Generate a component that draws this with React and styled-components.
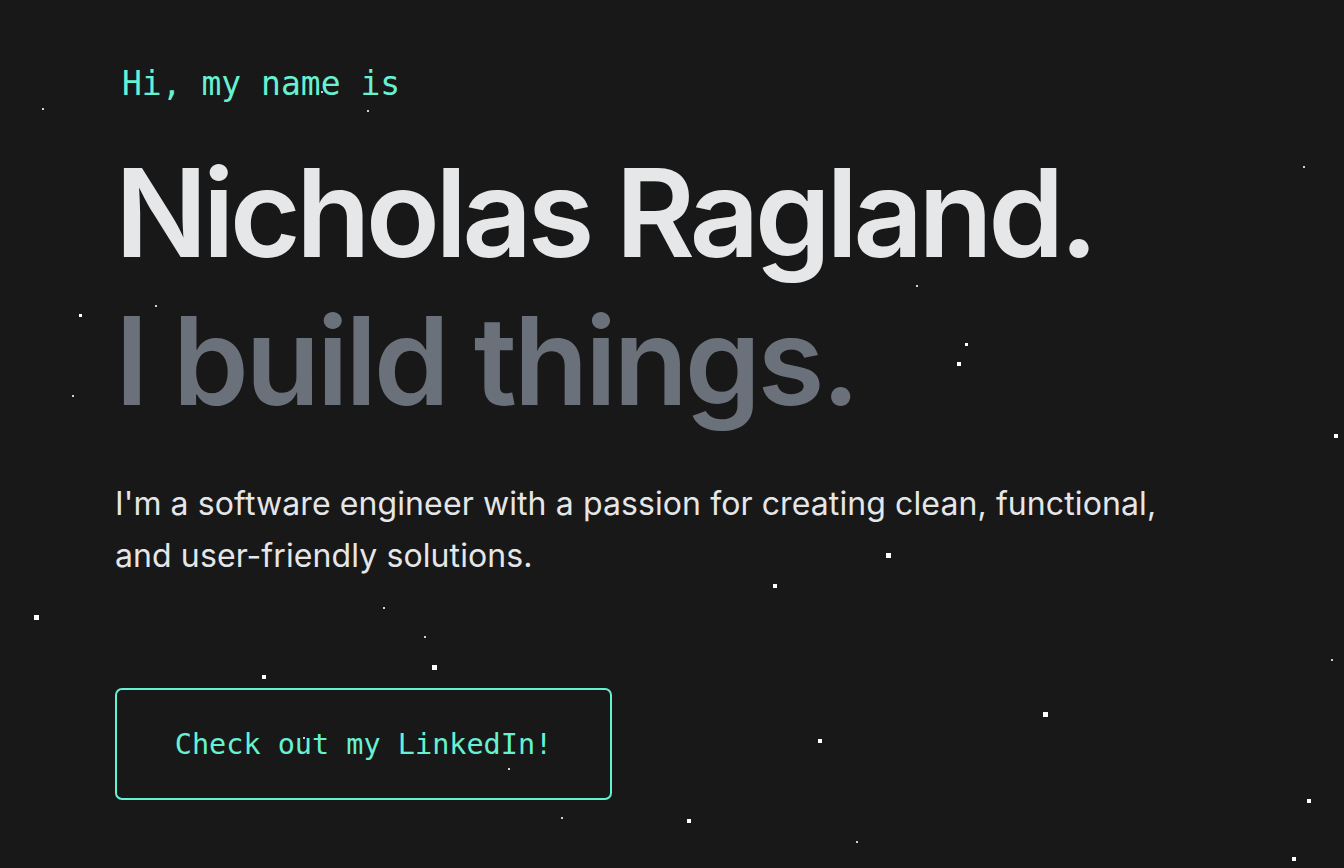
import styled, { createGlobalStyle } from "styled-components"

const GlobalStyle = createGlobalStyle`
  html, body {
    margin: 0;
    padding: 0;
    background: #181818;
  }
  #root {
    min-height: 100vh;
  }
`

const stars = [
  [42, 108, 2], [367, 110, 2], [321, 91, 2], [1303, 166, 2], [916, 285, 2],
  [79, 314, 3], [155, 305, 2], [965, 343, 3], [957, 362, 4], [487, 360, 4],
  [72, 395, 2], [1334, 434, 4], [886, 553, 5], [773, 584, 4], [34, 615, 5],
  [383, 607, 2], [424, 636, 2], [432, 665, 5], [262, 675, 4], [1331, 659, 2],
  [1043, 712, 5], [818, 739, 4], [303, 737, 2], [508, 768, 2], [1307, 799, 4],
  [687, 819, 4], [561, 817, 2], [856, 841, 2], [1292, 857, 4],
]

const Page = styled.main`
  position: relative;
  min-height: 868px;
  overflow: hidden;
  background: #181818;
`

const Sky = styled.div`
  position: absolute;
  inset: 0;
  pointer-events: none;
`

const Star = styled.span`
  position: absolute;
  background: #ffffff;
  opacity: ${(p) => (p.$size > 2 ? 1 : 0.8)};
`

const Hero = styled.section`
  position: relative;
  display: flex;
  flex-direction: column;
  align-items: flex-start;
  padding: 64px 0 0 115px;
`

const Greeting = styled.p`
  margin: 0 0 0 7px;
  font-family: "DejaVu Sans Mono", "Liberation Mono", monospace;
  font-size: 33px;
  line-height: 40px;
  color: #66f2d2;
`

const Title = styled.h1`
  margin: 35px 0 0 0;
  font-family: "Inter", "Lato", sans-serif;
  font-weight: 600;
  font-size: 122px;
  line-height: 148px;
  letter-spacing: ${(p) => p.$tracking || "-0.04em"};
  color: ${(p) => p.$color};
`

const Subtitle = styled(Title)`
  margin-top: 0;
`

const Blurb = styled.p`
  margin: 43px 0 0 0;
  max-width: 1080px;
  font-family: "Inter", "Lato", sans-serif;
  font-size: 32px;
  line-height: 52px;
  letter-spacing: 0.1px;
  color: #e5e6e8;
`

const Button = styled.a`
  margin-top: 106px;
  display: flex;
  align-items: center;
  justify-content: center;
  width: 497px;
  height: 112px;
  box-sizing: border-box;
  border: 2px solid #66f2d2;
  border-radius: 7px;
  font-family: "DejaVu Sans Mono", "Liberation Mono", monospace;
  font-size: 28.5px;
  color: #66f2d2;
  text-decoration: none;
`

export default function App() {
  return (
    <>
      <GlobalStyle />
      <Page>
        <Sky>
          {stars.map(([x, y, s], i) => (
            <Star key={i} $size={s} style={{ left: x, top: y, width: s, height: s }} />
          ))}
        </Sky>
        <Hero>
          <Greeting>Hi, my name is</Greeting>
          <Title $color="#e6e7e9">Nicholas Ragland.</Title>
          <Subtitle $color="#6b717a" $tracking="-0.028em">I build things.</Subtitle>
          <Blurb>
            I'm a software engineer with a passion for creating clean, functional, and user-friendly solutions.
          </Blurb>
          <Button href="#">Check out my LinkedIn!</Button>
        </Hero>
      </Page>
    </>
  )
}
